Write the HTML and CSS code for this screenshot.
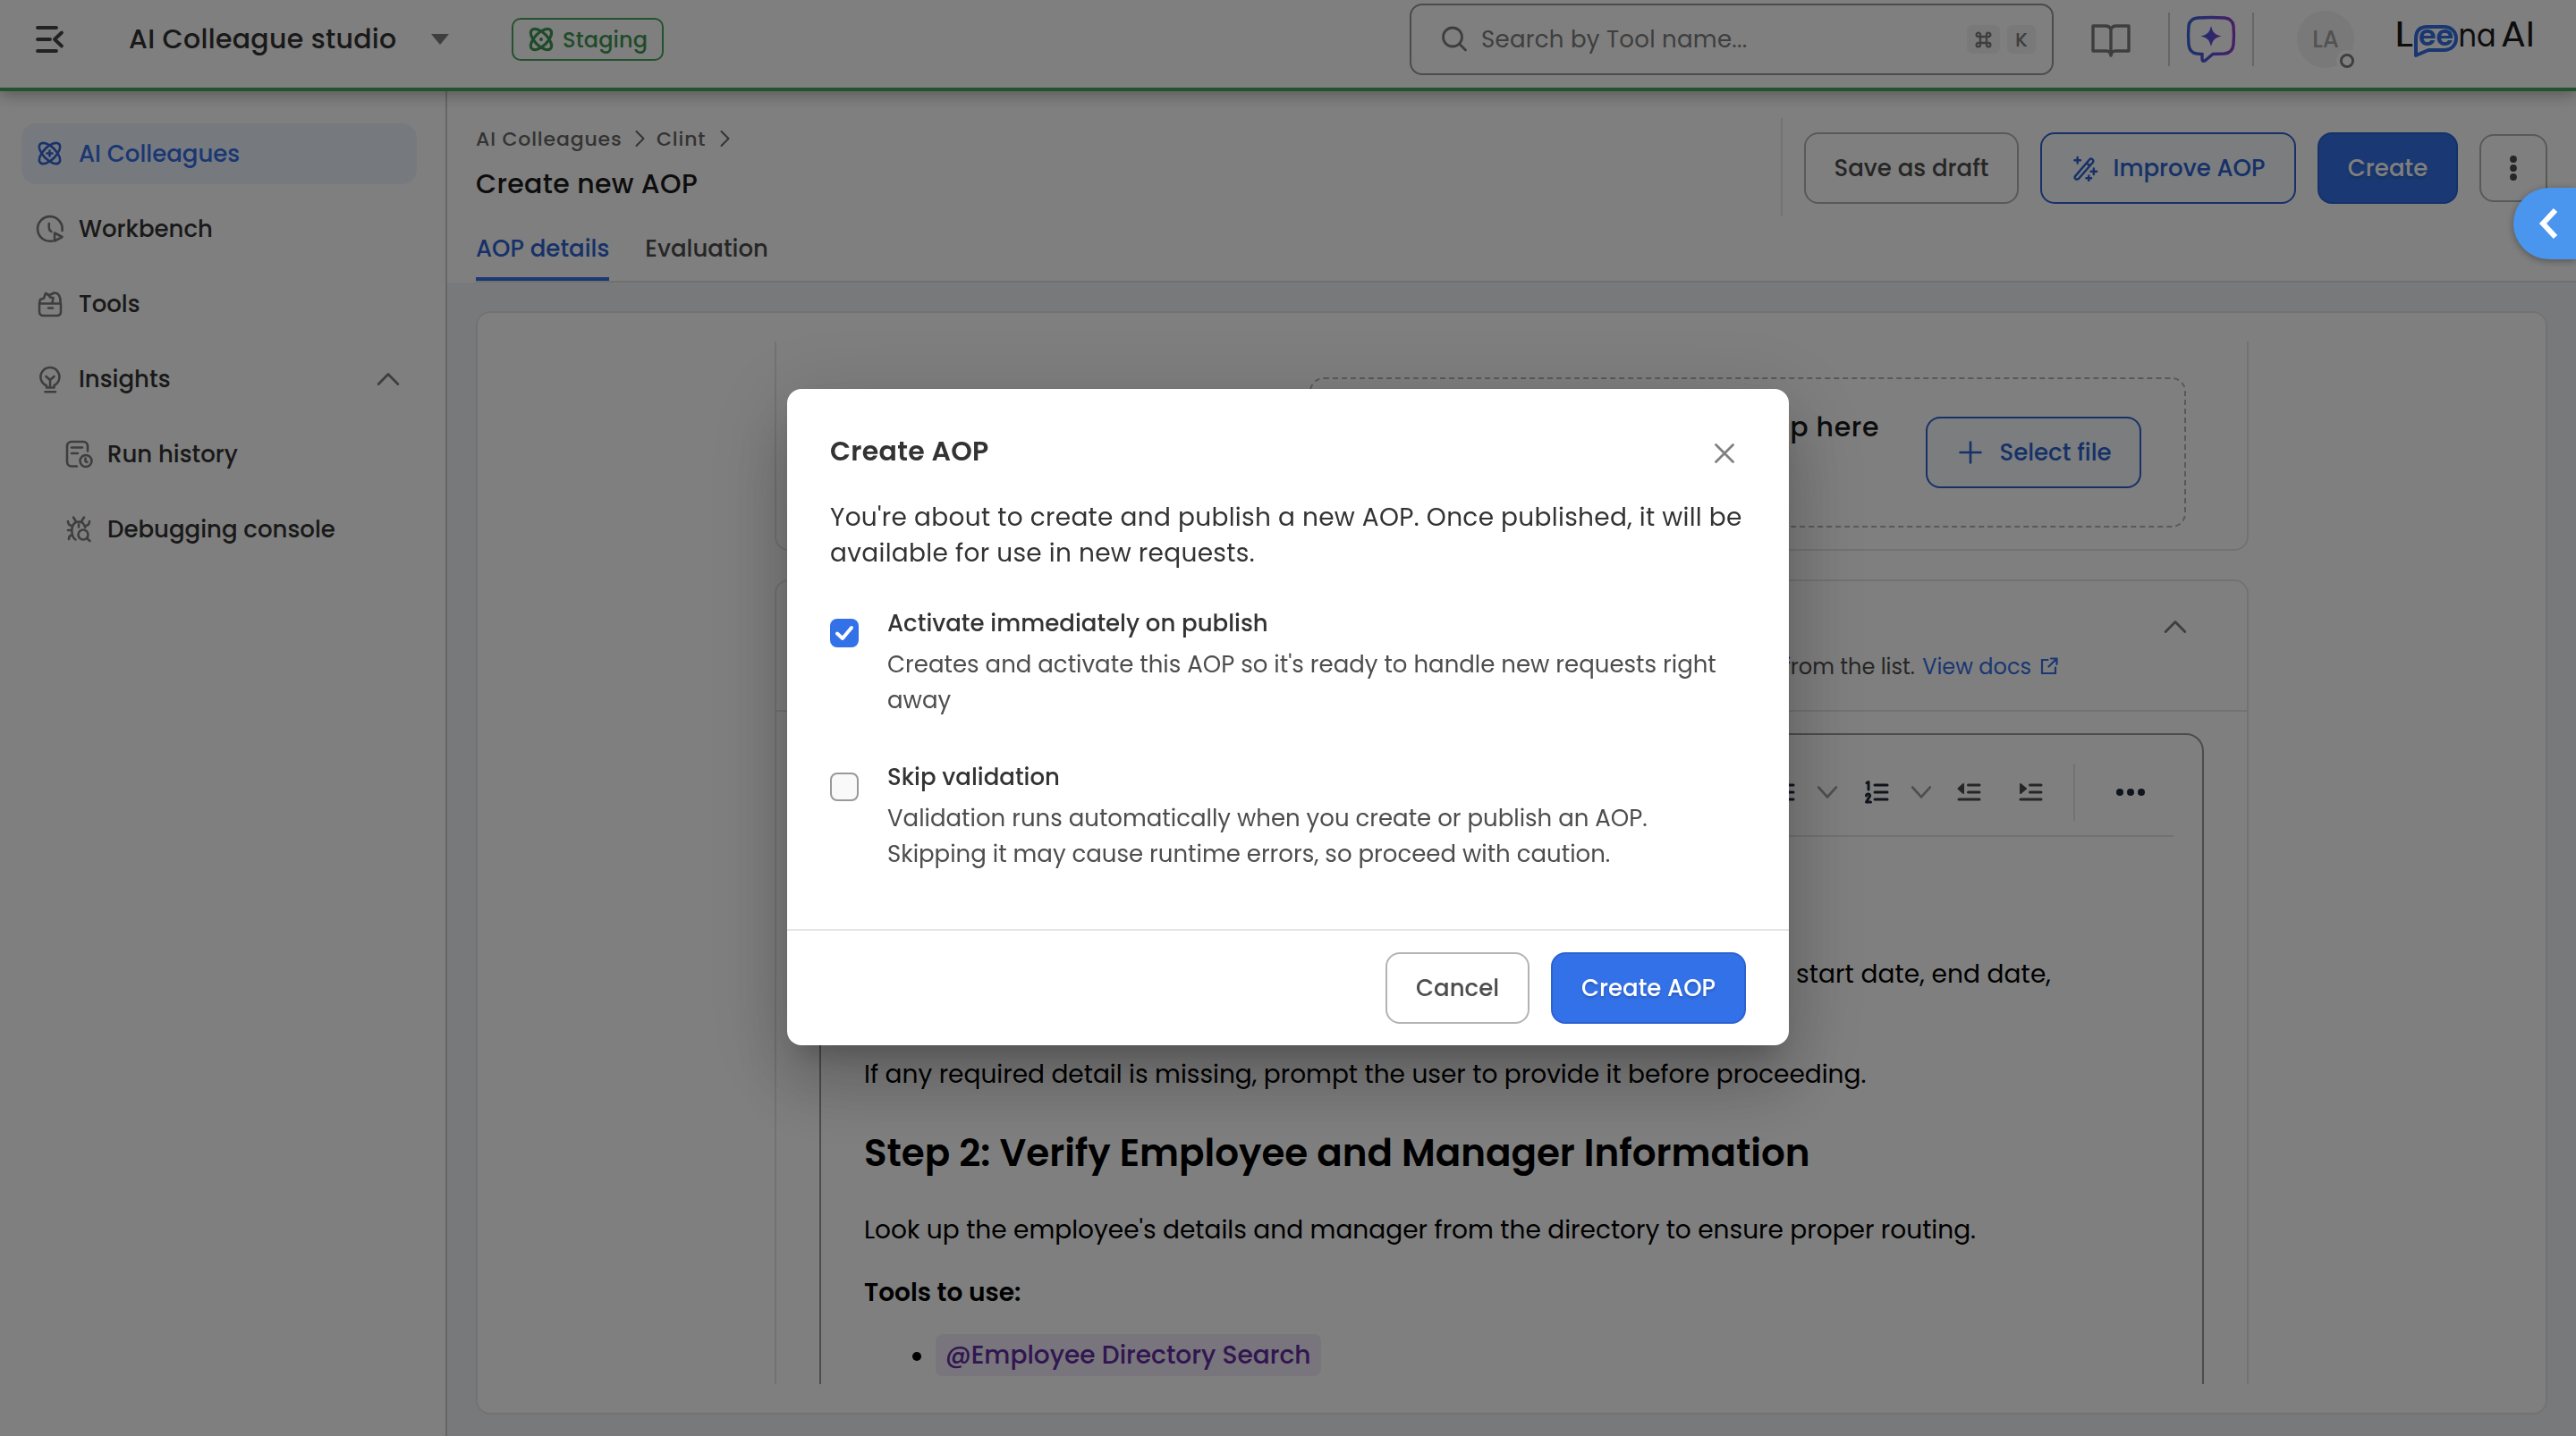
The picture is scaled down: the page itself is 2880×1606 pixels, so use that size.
FILE: index.html
```html
<!DOCTYPE html>
<html lang="en">
<head>
<meta charset="utf-8">
<title>AI Colleague studio</title>
<link rel="stylesheet" href="styles.css">
</head>
<body>
<svg class="defs" width="0" height="0" aria-hidden="true">
  <symbol id="atom" viewBox="0 0 32 32">
    <ellipse cx="16" cy="16" rx="14.8" ry="7.100" transform="rotate(45 16 16)"/>
    <ellipse cx="16" cy="16" rx="14.8" ry="7.100" transform="rotate(-45 16 16)"/>
  </symbol>
  <symbol id="chev-up" viewBox="0 0 24 24"><path d="M2 17 12 7l10 10"/></symbol>
  <symbol id="chev-down" viewBox="0 0 24 24"><path d="m3 7 9 10 9-10"/></symbol>
  <symbol id="chev-right" viewBox="0 0 24 24"><path d="m8.500 4 8 8-8 8"/></symbol>
</svg>

<div class="app">
  <header class="topbar">
    <svg class="icon burger" viewBox="0 0 32 32"><path d="M2 3h21M2 16h14M2 29h21M29 8.500l-8 7.500 8 7.500"/></svg>
    <div class="product">AI Colleague studio</div>
    <svg class="caret" viewBox="0 0 22 12"><path d="M1 0h20L11 12z"/></svg>
    <div class="env"><svg class="icon env-icon"><use href="#atom"/><circle class="dot" cx="16" cy="16" r="2"/></svg>Staging</div>
    <div class="search">
      <svg class="icon search-icon" viewBox="0 0 32 32"><circle cx="14" cy="13.500" r="10.500"/><path d="m21.500 21 7 7"/></svg>
      <span class="search-text">Search by Tool name...</span>
      <kbd class="key key-cmd"><svg class="icon" viewBox="0 0 24 24"><path d="M8 8h8v8H8zM8 8V5.500A2.500 2.500 0 1 0 5.500 8zM16 8h2.500A2.500 2.500 0 1 0 16 5.500zM8 16H5.500A2.500 2.500 0 1 0 8 18.500zM16 16v2.500a2.500 2.500 0 1 0 2.500-2.500z"/></svg></kbd>
      <kbd class="key">K</kbd>
    </div>
    <svg class="icon book" viewBox="0 0 44 38"><path d="M22 7c-1-3-3-4-6-4H2v28h15c3 0 4 1 5 5 1-4 2-5 5-5h15V3H28c-3 0-5 1-6 4zM22 7v28"/></svg>
    <i class="vline"></i>
    <svg class="assistant" viewBox="0 0 56 54">
      <defs><linearGradient id="violet" x1="0" x2="1"><stop offset="0" stop-color="#3465d8"/><stop offset=".5" stop-color="#5e4fd8"/><stop offset="1" stop-color="#8e3fce"/></linearGradient></defs>
      <path d="M13 3Q28 2 43 3Q52 4 53 12Q54 22 53 33Q52 42 43 43L30 43.500L21 51Q18 52 18 49V43.500L12 43Q4 42 3 33Q2 22 3 12Q4 4 13 3Z" fill="none" stroke="url(#violet)" stroke-width="3.400"/>
      <path d="M28 12c2 7.500 4 9.500 11.500 11.500C32 25.500 30 27.500 28 35c-2-7.500-4-9.500-11.500-11.500C24 21.500 26 19.500 28 12z" fill="url(#violet)"/>
    </svg>
    <i class="vline"></i>
    <div class="avatar">LA<i class="status"></i></div>
    <svg class="logo" viewBox="0 0 156 44">
      <text class="logo-ink tall" x="-1" y="32" textLength="21" lengthAdjust="spacingAndGlyphs">L</text>
      <path class="logo-bubble" d="M23 42V23C23 14 28 10 36 10H54C63 10 68 16 68 23S63 36 54 36H37Z"/>
      <text class="logo-ee" x="26" y="31" textLength="39" lengthAdjust="spacingAndGlyphs">ee</text>
      <text class="logo-ink" x="70.500" y="32" textLength="42" lengthAdjust="spacingAndGlyphs">na</text>
      <text class="logo-ink tall" x="118" y="32" textLength="38" lengthAdjust="spacingAndGlyphs">AI</text>
    </svg>
  </header>

  <div class="body">
    <nav class="sidebar">
      <a class="nav active"><svg class="icon"><use href="#atom" x="-.5" y="-.5" width="32" height="32"/><path d="M15.500 12.500v6M12.500 15.500h6"/></svg>AI Colleagues</a>
      <a class="nav"><svg class="icon" viewBox="0 0 32 32"><path d="M18.500 29.500A13.800 13.800 0 1 1 29.500 18M14.800 10v5c0 2 1 3 2.500 4M21 20.500v9l8.500-4.500z"/></svg>Workbench</a>
      <a class="nav"><svg class="icon" viewBox="0 0 32 32"><path d="M4 15.500h24v9c0 3-1.500 4.500-4.500 4.500h-15C5.500 29 4 27.500 4 24.500zM14 20.500h5M4 15l1-4 4-1.500L11 4l3.500 2 2-.5 4-2c5 0 7.500 4 7 11M14.500 6l1.500 2.500 3.500.5-1 5"/></svg>Tools</a>
      <a class="nav"><svg class="icon" viewBox="0 0 32 32"><path d="M12 25.500v-2.200A10.500 10.500 0 1 1 20.500 23v2.500zM11.500 13l4.500 4 4.500-4M16 17v8M10.500 30.300h11.500"/></svg>Insights<svg class="icon nav-chev"><use href="#chev-up"/></svg></a>
      <a class="nav sub"><svg class="icon" viewBox="0 0 32 32"><path d="M14 29.500H8c-3 0-5-2-5-5V7c0-3 2-5 5-5h13c3 0 5 2 5 5v5.500M8 8.500h12M8 15h7"/><circle cx="24" cy="23.500" r="6.500"/><path d="M23.500 20.500V24l2 .8"/></svg>Run history</a>
      <a class="nav sub"><svg class="icon" viewBox="0 0 32 32"><path d="M12.500 27.500C7 24 7.500 13 11 9.500c1.500-2.500 8.500-2.500 10 0 1.300 1.500 2 3 2.200 4.500M10 2.500l2.500 4M22 2.500l-2.500 4M4 7c0 3 1.500 4.500 4 5M28 7c0 3-1.500 4.500-4 5M4 17h4M5 27c0-3 1-4.500 4-5M16 10.500v3"/><circle cx="21" cy="22" r="5.500"/><path d="m25 26 3.500 3"/></svg>Debugging console</a>
    </nav>

    <main class="main">
      <section class="head">
        <div class="head-row">
          <div class="titles">
            <div class="crumbs"><span class="crumb-a">AI Colleagues</span><svg class="icon crumb-chev"><use href="#chev-right"/></svg><span class="crumb-b">Clint</span><svg class="icon crumb-chev"><use href="#chev-right"/></svg></div>
            <h1 class="title">Create new AOP</h1>
          </div>
          <div class="actions">
            <button class="btn save">Save as draft</button>
            <button class="btn outline improve"><svg class="icon" viewBox="2 1 30 31"><path d="M4 26 21.500 5.500c2-2 5.500.5 4 3.500L8.500 28.500c-2.500 2-6 0-4.500-2.500zM18 10l3.500 3M7 3v7M3.500 6.500h7M26.500 16.500v7M23 20h7M20.500 25v6M17.500 28h6"/></svg>Improve AOP</button>
            <button class="btn primary create">Create</button>
            <button class="btn more"><svg viewBox="0 0 8 28"><circle cx="4" cy="4" r="3.900"/><circle cx="4" cy="14" r="3.900"/><circle cx="4" cy="24" r="3.900"/></svg></button>
          </div>
        </div>
        <div class="tabs"><span class="tab on">AOP details</span><span class="tab">Evaluation</span></div>
      </section>

      <section class="panel">
        <div class="scroller">
          <div class="card upload">
            <div class="dropzone">
              <span class="drop-text">Drag &amp; drop here</span>
              <button class="btn outline select"><svg class="icon" viewBox="0 0 26 26"><path d="M13 1.500v23M1.500 13h23"/></svg>Select file</button>
            </div>
          </div>

          <div class="card steps">
            <div class="steps-head">
              <p class="hint">from the list. <a class="docs">View docs</a><svg class="icon ext" viewBox="0 0 20 20"><path d="M8.500 3H2v15h15v-6.500M12 1.500h6.500V8M18 2l-8.500 8.500"/></svg></p>
              <svg class="icon steps-chev"><use href="#chev-up"/></svg>
            </div>
            <div class="editor">
              <div class="toolbar">
                <svg class="icon list" viewBox="0 0 28 28"><path d="M10 6h15M10 14h15M10 22h15"/></svg>
                <svg class="icon tb-chev c1"><use href="#chev-down"/></svg>
                <svg class="icon list n" viewBox="0 0 28 28"><path d="M12 6h14M12 14h14M12 22h14M3 3.500l2-1V11M2.500 18c.5-3 5-2.500 4 .5L2.500 25H7.500"/></svg>
                <svg class="icon tb-chev c2"><use href="#chev-down"/></svg>
                <svg class="icon list dark c3" viewBox="0 0 28 28"><path d="M13.500 6H26M13.500 14H26M3 22h23"/><path class="solid" d="M8 5v10L2.500 10z"/></svg>
                <svg class="icon list dark c4" viewBox="0 0 28 28"><path d="M13.500 6H26M13.500 14H26M3 22h23"/><path class="solid" d="M3 5v10l6-5z"/></svg>
                <i class="tb-line"></i>
                <svg class="dots" viewBox="0 0 32 8"><circle cx="4" cy="4" r="4"/><circle cx="16" cy="4" r="4"/><circle cx="28" cy="4" r="4"/></svg>
              </div>
              <article class="doc">
                <p class="para opening">, start date, end date,</p>
                <p class="para missing">If any required detail is missing, prompt the user to provide it before proceeding.</p>
                <h2 class="step">Step 2: Verify Employee and Manager Information</h2>
                <p class="para lookup">Look up the employee's details and manager from the directory to ensure proper routing.</p>
                <p class="para tools">Tools to use:</p>
                <div class="bullet"><i class="disc"></i><span class="chip">@Employee Directory Search</span></div>
              </article>
            </div>
          </div>
        </div>
      </section>
    </main>
  </div>
</div>

<div class="overlay">
  <div class="modal" role="dialog">
    <div class="modal-body">
      <div class="modal-head"><h2 class="modal-title">Create AOP</h2><svg class="icon close" viewBox="0 0 24 24"><path d="m2.500 2.500 19 19M21.500 2.500l-19 19"/></svg></div>
      <p class="modal-text">You're about to create and publish a new AOP. Once published, it will be available for use in new requests.</p>
      <div class="option">
        <span class="box checked"><svg class="icon" viewBox="0 0 32 32"><path d="m8 16.500 6 5.500 10-12"/></svg></span>
        <div class="option-copy"><div class="option-label">Activate immediately on publish</div><p class="option-text">Creates and activate this AOP so it's ready to handle new requests right away</p></div>
      </div>
      <div class="option second">
        <span class="box"></span>
        <div class="option-copy"><div class="option-label">Skip validation</div><p class="option-text">Validation runs automatically when you create or publish an AOP.<br>Skipping it may cause runtime errors, so proceed with caution.</p></div>
      </div>
    </div>
    <div class="modal-foot"><button class="btn cancel">Cancel</button><button class="btn primary confirm">Create AOP</button></div>
  </div>
</div>
<div class="drawer-tab"><svg class="icon" viewBox="0 0 24 36"><path d="M20 3 6 18l14 15"/></svg></div>
</body>
</html>
```
FILE: styles.css
```css
* { box-sizing: border-box; }
body, h1, h2, p { margin: 0; }
body {
  width: 2880px;
  height: 1606px;
  overflow: hidden;
  background: #fff;
  color: #333;
  font-family: Poppins, Inter, "Noto Sans", sans-serif;
  font-size: 26px;
}
.defs { display: block; position: absolute; }
.icon {
  flex: none;
  fill: none;
  stroke: currentColor;
  stroke-width: 2.600;
  stroke-linecap: round;
  stroke-linejoin: round;
}
.app { display: flex; flex-direction: column; height: 1606px; }

/* Top bar */
.topbar {
  position: relative;
  z-index: 1;
  display: flex;
  align-items: center;
  flex: none;
  height: 102px;
  padding: 0 45px 10px 40px;
  border-bottom: 4px solid #48a45c;
  background: #fff;
  box-shadow: 0 4px 16px rgba(0, 0, 0, .3);
}
.burger { width: 32px; height: 32px; color: #444; stroke-width: 3.800; }
.product { margin-left: 72px; width: 337px; font-size: 30px; font-weight: 500; letter-spacing: .3px; white-space: nowrap; }
.caret { width: 22px; height: 12px; fill: #7d7d7d; }
.env {
  display: flex;
  align-items: center;
  width: 170px;
  height: 48px;
  margin-left: 69px;
  padding-left: 15px;
  gap: 8px;
  border: 2px solid #48a45c;
  border-radius: 10px;
  color: #3f9652;
  font-size: 24px;
  font-weight: 500;
  letter-spacing: .15px;
}
.env-icon { width: 32px; height: 32px; stroke-width: 3.200; }
.env-icon .dot { fill: currentColor; stroke: none; }
.search {
  display: flex;
  align-items: center;
  width: 720px;
  height: 80px;
  margin-left: 834px;
  padding: 0 18px 0 32px;
  border: 2px solid #999;
  border-radius: 14px;
  color: #7d7d7d;
}
.search-icon { width: 32px; height: 32px; margin-right: 14px; stroke-width: 2.800; }
.search-text { flex: 1; letter-spacing: .28px; }
.key {
  display: flex;
  align-items: center;
  justify-content: center;
  width: 32px;
  height: 32px;
  margin-left: 8px;
  border-radius: 6px;
  background: #f3f3f3;
  color: #7d7d7d;
  font: 500 22px Poppins, Inter, sans-serif;
}
.key-cmd { width: 37px; }
.key-cmd .icon { width: 21px; height: 21px; }
.book { width: 44px; height: 38px; margin: 2px 0 0 42px; color: #7d7d7d; stroke-width: 3.400; }
.vline { flex: none; width: 2px; height: 60px; margin-left: 42px; background: #ccc; }
.assistant { flex: none; width: 56px; height: 54px; margin-left: 18px; }
.assistant + .vline { margin-left: 18px; }
.avatar {
  position: relative;
  display: flex;
  align-items: center;
  justify-content: center;
  width: 64px;
  height: 64px;
  margin-left: 48px;
  border-radius: 50%;
  background: #f2f2f2;
  color: #a5a5a5;
  font-size: 26px;
  font-weight: 500;
}
.status {
  position: absolute;
  right: -4px;
  bottom: -4px;
  width: 24px;
  height: 24px;
  border: 4px solid #fff;
  border-radius: 50%;
  background: radial-gradient(circle, #fff 4.800px, #7d7d7d 5.300px);
}
.logo { flex: none; width: 156px; height: 44px; margin: 0 0 4px 46px; overflow: visible; }
.logo-ink { fill: #1a1a1a; font-size: 36px; }
.logo-ink.tall { font-size: 40px; }
.logo-ee { fill: #346ee4; font-size: 31px; font-weight: 600; }
.logo-bubble { fill: none; stroke: #346ee4; stroke-width: 4; stroke-linejoin: round; }

/* Side navigation */
.body { display: flex; flex: 1; min-height: 0; }
.sidebar {
  display: flex;
  flex: none;
  flex-direction: column;
  gap: 16px;
  width: 500px;
  padding: 36px 32px 0 24px;
  border-right: 2px solid #ccc;
}
.nav {
  display: flex;
  align-items: center;
  gap: 16px;
  height: 68px;
  padding: 0 19px 0 16px;
  border-radius: 16px;
  font-weight: 500;
}
.nav .icon { width: 32px; height: 32px; color: #7d7d7d; overflow: visible; }
.nav.active { background: #edf4ff; color: #346ee4; }
.nav.active .icon { color: #3465d8; }
.nav.sub { padding-left: 48px; }
.nav .nav-chev { width: 26px; height: 26px; margin-left: auto; }

/* Page head */
.main { display: flex; flex: 1; flex-direction: column; min-width: 0; background: #f1f3f7; }
.head { flex: none; height: 214px; padding: 30px 0 0 32px; background: #fff; }
.head-row { display: flex; justify-content: space-between; height: 110px; padding-right: 32px; }
.titles { padding-top: 7px; }
.crumbs { display: flex; align-items: center; height: 32px; color: #666; font-size: 22px; font-weight: 500; letter-spacing: .85px; }
.crumb-a { width: 171px; }
.crumb-b { width: 64px; }
.crumb-chev { width: 24px; height: 24px; margin-right: 7px; stroke-width: 2; }
.title { margin-top: 15px; color: #1a1a1a; font-size: 30px; font-weight: 500; line-height: 40px; letter-spacing: .3px; }
.actions { display: flex; align-items: center; padding: 2px 0 0 24px; border-left: 2px solid #e5e5e5; }
.btn {
  display: flex;
  align-items: center;
  justify-content: center;
  height: 80px;
  padding: 0;
  border: 2px solid #b3b3b3;
  border-radius: 16px;
  background: #fff;
  color: #4d4d4d;
  font: 500 26px Poppins, Inter, sans-serif;
}
.btn.save { width: 240px; }
.btn.outline { border-color: #2c62d0; background: #f7fbff; color: #2c62d0; }
.btn.improve { width: 286px; margin-left: 24px; padding-left: 2px; gap: 17px; }
.btn.improve .icon { width: 28px; height: 29px; }
.btn.primary { border-color: #2c62d0; background: #3371e8; color: #fff; text-shadow: 0 2px 3px rgba(0, 0, 0, .2); }
.btn.create { width: 157px; margin-left: 24px; }
.btn.more { width: 76px; height: 76px; margin-left: 24px; }
.more svg { width: 8px; height: 28px; fill: #4d4d4d; }
.tabs { display: flex; gap: 40px; height: 74px; padding-top: 16px; border-bottom: 2px solid #e0e0e0; line-height: 40px; font-weight: 500; }
.tab { height: 56px; color: #4d4d4d; }
.tab.on { border-bottom: 4px solid #3371e8; color: #2c62d0; }

/* Panel */
.panel {
  display: flex;
  justify-content: center;
  flex: 1;
  min-height: 0;
  margin: 32px 32px 24px;
  padding: 32px 0;
  border: 2px solid #e5e5e5;
  border-radius: 16px;
  background: #fff;
}
.scroller { width: 1648px; overflow: hidden; }
.card { border: 2px solid #e5e5e5; border-radius: 16px; }
.upload { display: flex; justify-content: flex-end; height: 234px; padding: 40px 68px 0 0; border-top: 0; border-radius: 0 0 16px 16px; }
.dropzone {
  display: flex;
  align-items: center;
  justify-content: flex-end;
  width: 980px;
  height: 168px;
  padding-right: 48px;
  border: 2px dashed #b3b3b3;
  border-radius: 16px;
}
.drop-text { margin: 0 52px 57px 0; color: #1a1a1a; font-size: 30px; font-weight: 500; letter-spacing: .6px; }
.btn.select { width: 241px; padding-left: 4px; gap: 19px; }
.select .icon { width: 26px; height: 26px; }
.steps { height: 1000px; margin-top: 32px; }
.steps-head { display: flex; justify-content: flex-end; height: 146px; border-bottom: 2px solid #e5e5e5; }
.hint { display: flex; align-items: center; height: 40px; margin-top: 75px; color: #4d4d4d; font-size: 24px; white-space: pre; }
.docs { margin-left: 2px; color: #346ee4; }
.ext { width: 20px; height: 20px; margin-left: 10px; color: #346ee4; stroke-width: 2.200; stroke-linejoin: miter; }
.steps-chev { width: 26px; height: 26px; margin: 38px 67px 0 118px; color: #7d7d7d; }

/* Editor */
.editor { margin: 24px 48px 0; border: 2px solid #999; border-radius: 20px; height: 900px; }
.toolbar {
  display: flex;
  align-items: center;
  justify-content: flex-end;
  height: 114px;
  margin: 0 32px;
  padding: 32px 32px 16px 0;
  border-bottom: 2px solid #e5e5e5;
}
.list { width: 28px; height: 28px; color: #1e293b; stroke-width: 3; }
.list.n { margin-left: 28px; }
.list.dark { color: #4d4d4d; }
.solid { fill: currentColor; stroke-width: 2; }
.tb-chev { width: 26px; height: 26px; color: #9a9da3; }
.tb-chev.c1 { margin-left: 22px; }
.tb-chev.c2 { margin-left: 23px; }
.list.c3 { margin-left: 26px; }
.list.c4 { margin-left: 41px; }
.tb-line { flex: none; width: 2px; height: 64px; margin-left: 34px; background: #e5e5e5; }
.dots { flex: none; width: 32px; height: 8px; margin-left: 46px; fill: #1e293b; }
.doc { padding: 134px 0 0 48px; color: #000; font-size: 28px; }
.para { line-height: 40px; white-space: nowrap; }
.opening { width: 1327px; text-align: right; letter-spacing: .1px; }
.missing { margin-top: 72px; }
.step { margin-top: 40px; font-size: 42px; font-weight: 600; line-height: 56px; }
.lookup { margin-top: 38px; }
.tools { margin-top: 30px; font-weight: 600; }
.bullet { display: flex; align-items: center; height: 47px; margin-top: 26px; }
.disc { width: 10px; height: 10px; margin: 2px 16px 0 54px; border-radius: 50%; background: #000; }
.chip { padding: 0 12px 0 11px; border-radius: 8px; background: #f1eafb; color: #622ca0; font-weight: 500; line-height: 47px; }

/* Dialog */
.overlay {
  position: fixed;
  inset: 0;
  z-index: 5;
  display: flex;
  align-items: center;
  justify-content: center;
  padding-bottom: 2px;
  background: rgba(0, 0, 0, .5);
}
.modal {
  display: flex;
  flex-direction: column;
  width: 1120px;
  height: 734px;
  border-radius: 16px;
  background: #fff;
  box-shadow: 0 22px 30px -14px rgba(0, 0, 0, .2), 0 48px 76px 6px rgba(0, 0, 0, .14), 0 18px 92px 16px rgba(0, 0, 0, .12);
}
.modal-body { flex: 1; padding: 50px 48px 0; }
.modal-head { display: flex; align-items: flex-start; justify-content: space-between; height: 74px; }
.modal-title { font-size: 30px; font-weight: 600; line-height: 40px; letter-spacing: .3px; }
.close { width: 24px; height: 24px; margin: 10px 12px 0 0; color: #808080; stroke-width: 2.800; }
.modal-text { font-size: 28px; line-height: 40px; letter-spacing: .3px; }
.option { display: flex; gap: 32px; margin-top: 38px; }
.option.second { margin-top: 46px; }
.box { flex: none; width: 32px; height: 32px; margin-top: 15px; border: 2px solid #999; border-radius: 8px; background: #f9f9f9; }
.box.checked { border: 0; background: #3371e8; color: #fff; }
.box .icon { display: block; width: 32px; height: 32px; stroke-width: 4; }
.option-label { font-weight: 500; line-height: 40px; }
.option-text { margin-top: 6px; color: #4d4d4d; line-height: 40px; }
.modal-foot {
  display: flex;
  justify-content: flex-end;
  gap: 24px;
  height: 130px;
  padding: 24px 48px 0;
  border-top: 2px solid #e5e5e5;
}
.cancel { width: 161px; }
.confirm { width: 218px; }

/* Drawer handle on the right edge */
.drawer-tab {
  position: fixed;
  top: 210px;
  right: 0;
  z-index: 6;
  display: flex;
  align-items: center;
  width: 70px;
  height: 80px;
  padding-left: 27px;
  border-radius: 40px 0 0 40px;
  background: #4a95ee;
  box-shadow: 0 2px 8px rgba(0, 0, 0, .35);
  color: #fff;
}
.drawer-tab .icon { width: 24px; height: 36px; stroke-width: 6; stroke-linecap: butt; stroke-linejoin: miter; }
```
